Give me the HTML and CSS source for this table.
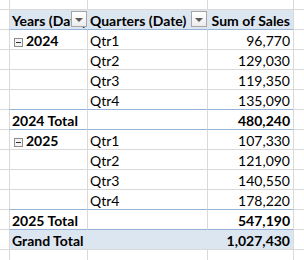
FILE: index.html
```html
<!DOCTYPE html>
<html>
<head>
<meta charset="utf-8">
<link rel="stylesheet" href="styles.css">
</head>
<body>
<div class="sheet">
  <!-- row 0 (partial) -->
  <div class="c edge top"></div><div class="c top"></div><div class="c top"></div><div class="c top"></div><div class="c top"></div>

  <!-- header -->
  <div class="c edge"></div>
  <div class="c hd">Years (Date)<span class="dd"><span class="tri"></span></span></div>
  <div class="c hd nl">Quarters (Date)<span class="dd"><span class="tri"></span></span></div>
  <div class="c hd nl num">Sum of Sales</div>
  <div class="c"></div>

  <!-- 2024 -->
  <div class="c edge"></div>
  <div class="c bt b"><span class="mn"></span>2024</div>
  <div class="c bt">Qtr1</div>
  <div class="c bt num">96,770</div>
  <div class="c"></div>

  <div class="c edge"></div><div class="c"></div><div class="c">Qtr2</div><div class="c num">129,030</div><div class="c"></div>
  <div class="c edge"></div><div class="c"></div><div class="c">Qtr3</div><div class="c num">119,350</div><div class="c"></div>
  <div class="c edge"></div><div class="c"></div><div class="c">Qtr4</div><div class="c num">135,090</div><div class="c"></div>

  <div class="c edge"></div><div class="c bt b">2024 Total</div><div class="c bt"></div><div class="c bt num b">480,240</div><div class="c"></div>

  <!-- 2025 -->
  <div class="c edge"></div>
  <div class="c bt b"><span class="mn"></span>2025</div>
  <div class="c bt">Qtr1</div>
  <div class="c bt num">107,330</div>
  <div class="c"></div>

  <div class="c edge"></div><div class="c"></div><div class="c">Qtr2</div><div class="c num">121,090</div><div class="c"></div>
  <div class="c edge"></div><div class="c"></div><div class="c">Qtr3</div><div class="c num">140,550</div><div class="c"></div>
  <div class="c edge"></div><div class="c"></div><div class="c">Qtr4</div><div class="c num">178,220</div><div class="c"></div>

  <div class="c edge"></div><div class="c bt b">2025 Total</div><div class="c bt"></div><div class="c bt num b">547,190</div><div class="c"></div>

  <div class="c edge"></div><div class="c bt b gt">Grand Total</div><div class="c bt gt nl"></div><div class="c bt gt nl num b">1,027,430</div><div class="c"></div>

  <!-- bottom partial -->
  <div class="c edge"></div><div class="c"></div><div class="c"></div><div class="c"></div><div class="c"></div>
</div>
</body>
</html>
```
FILE: styles.css
```css
html, body {
  margin: 0;
  padding: 0;
  background: #ffffff;
}
.sheet {
  display: grid;
  grid-template-columns: 9px 78px 120px 86px 11px;
  grid-template-rows: 9px repeat(12, 20px) 11px;
  width: 304px;
  height: 260px;
  overflow: hidden;
  font-family: "Lato", "Liberation Sans", sans-serif;
  font-size: 14px;
  color: #000000;
}
.c {
  box-sizing: border-box;
  border-top: 1px solid #d9d9d9;
  border-left: 1px solid #d9d9d9;
  padding: 1px 3px 0 2px;
  line-height: 19px;
  white-space: nowrap;
  overflow: hidden;
  position: relative;
}
.c.edge { border-left: none; }
.c.top { border-top: none; }
.hd {
  background: #dce6f1;
  font-weight: bold;
}
.hd.nl, .gt.nl { border-left-color: #dce6f1; }
.bt { border-top-color: #95b3d7; }
.b { font-weight: bold; }
.gt { background: #dce6f1; }
.num { text-align: right; }
.dd {
  position: absolute;
  right: 0;
  top: 1px;
  width: 16px;
  height: 16px;
  box-sizing: border-box;
  border: 1px solid #a6a6a6;
  background: linear-gradient(#ffffff, #ececec);
  display: flex;
  align-items: center;
  justify-content: center;
}
.tri {
  width: 0;
  height: 0;
  border-left: 4px solid transparent;
  border-right: 4px solid transparent;
  border-top: 4px solid #595959;
  margin-top: 1px;
}
.mn {
  display: inline-block;
  box-sizing: border-box;
  width: 9px;
  height: 9px;
  border: 1px solid #8c8c8c;
  background: #f4f4f4;
  margin: 0 3px 0 2px;
  vertical-align: -1px;
  position: relative;
}
.mn::after {
  content: "";
  position: absolute;
  left: 1px;
  right: 1px;
  top: 3px;
  height: 1px;
  background: #333333;
}
```
